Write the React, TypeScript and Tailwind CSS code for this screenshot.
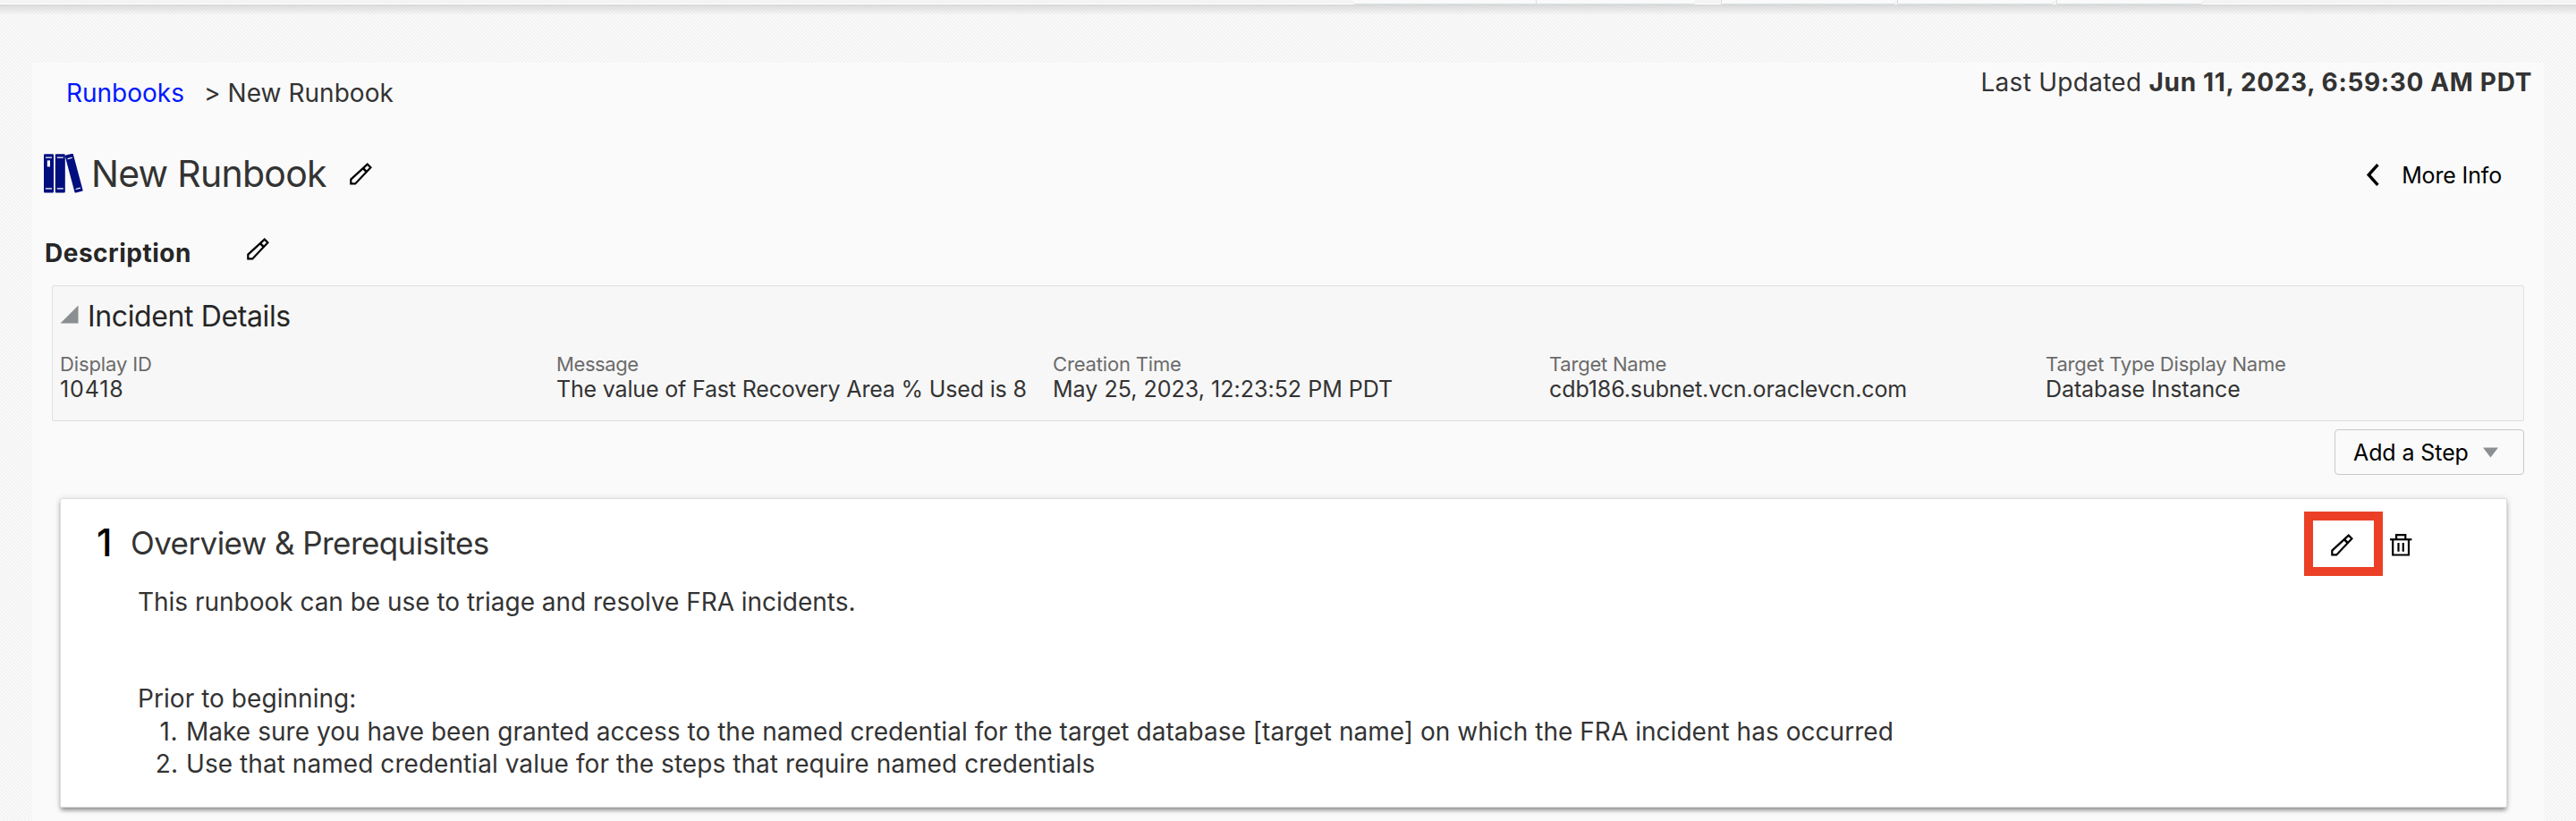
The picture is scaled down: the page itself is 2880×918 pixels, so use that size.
import React from "react";

function Pencil({ className }: { className: string }) {
  return (
    <svg className={className} width="25" height="25" viewBox="0 0 25 25" fill="none" stroke="#000" strokeWidth="2.2">
      <path d="M1.3 23.4V18.6L19.8 1.6L23.4 5.2L6.2 23.4Z" />
      <path d="M14.8 6L18.9 10.1" strokeWidth="2.6" />
    </svg>
  );
}

function Trash({ className }: { className: string }) {
  return (
    <svg className={className} width="25" height="25" viewBox="0 0 25 25" fill="none" stroke="#000" strokeWidth="2.2">
      <path d="M7.1 6V1.2H17.3V6" />
      <path d="M0 6.2H24.4" />
      <path d="M3.2 6.2V23.5H21V6.2" />
      <path d="M9.5 10V19.8M14.8 10V19.8" />
    </svg>
  );
}

function Books() {
  return (
    <svg className="mt-0.5 shrink-0" width="44" height="44" viewBox="0 0 44 44" fill="#000f7e">
      <rect x="0" y="0.2" width="11" height="43.2" rx="1.2" />
      <rect x="12.8" y="0.2" width="11" height="43.2" rx="1.2" />
      <g transform="rotate(-15 33.6 21.8)">
        <rect x="29" y="0" width="9.4" height="43.4" rx="1.2" />
        <path d="M31 4.4H36.4M31 39.4H36.4" stroke="#fff" strokeWidth="1.2" />
      </g>
      <path d="M2 4.2H9M14.8 4.2H21.8M2 38.9H9M14.8 38.9H21.8" stroke="#fff" strokeWidth="1.2" />
      <rect x="3.8" y="7.4" width="3.2" height="7" fill="#fff" />
    </svg>
  );
}

const details = [
  { label: "Display ID", value: "10418", l: "tracking-[-0.12px]", v: "tracking-[0.9px]" },
  { label: "Message", value: "The value of Fast Recovery Area % Used is 8", l: "tracking-[-0.4px]", v: "tracking-[-0.17px]" },
  { label: "Creation Time", value: "May 25, 2023, 12:23:52 PM PDT", l: "tracking-[-0.17px]", v: "tracking-[0.02px]" },
  { label: "Target Name", value: "cdb186.subnet.vcn.oraclevcn.com", l: "tracking-[-0.23px]", v: "tracking-[-0.1px]" },
  { label: "Target Type Display Name", value: "Database Instance", l: "tracking-[-0.2px]", v: "tracking-[-0.1px]" },
];

const tab = "h-[5px] border-b border-[#d8dfe3] bg-[#fafafa]";

export default function App() {
  return (
    <div className="flex h-[918px] w-[2880px] flex-col overflow-hidden bg-[repeating-linear-gradient(45deg,#f2f2f2_0px,#f2f2f2_1.414px,#fafafa_1.414px,#fafafa_2.828px)] font-['Inter',sans-serif] text-[#333333]">
      <header className="h-[5px] shrink-0 border-b border-white bg-[#f4f4f4]">
        <div className="flex pl-[1512px]">
          <div className={`${tab} w-[205px] rounded-bl`} />
          <div className={`${tab} mr-7 w-[179px] rounded-br border-l`} />
          <div className={`${tab} mr-px w-[196px] rounded-br border-l`} />
          <div className={`${tab} mr-0.5 w-[176px] rounded-br border-l`} />
          <div className={`${tab} w-[164px] rounded-br border-l`} />
        </div>
      </header>
      <div className="h-3 shrink-0 bg-linear-to-b from-black/12 to-transparent" />

      <main className="mx-9 mt-[53px] flex grow flex-col bg-[#fafafa]">
        <div className="flex h-[100px] shrink-0 items-start justify-between pr-[13px] pl-[38px] text-[28px] leading-10">
          <nav className="mt-3.5 flex">
            <a className="w-[154px] text-[#0018ff]">Runbooks</a>
            <span className="tracking-[0.05px]">&gt; New Runbook</span>
          </nav>
          <p className="mt-0.5 tracking-[0.28px]">
            Last Updated <b className="font-bold tracking-[0.65px]">Jun 11, 2023, 6:59:30 AM PDT</b>
          </p>
        </div>

        <div className="flex h-[93px] shrink-0 items-start pr-[47px] pl-[13px]">
          <Books />
          <h1 className="ml-[9px] w-[289px] text-[41px] leading-[48px] tracking-[-0.72px] whitespace-nowrap">New Runbook</h1>
          <Pencil className="mt-3" />
          <div className="ml-auto flex items-start text-black">
            <svg className="mt-[13px] mr-6" width="16" height="25" viewBox="0 0 16 25" fill="none" stroke="#000" strokeWidth="3.4">
              <path d="M13.4 1.2L3.2 12.5L13.4 23.8" />
            </svg>
            <span className="mt-[11px] text-[25px] leading-[30px] tracking-[-0.15px]">More Info</span>
          </div>
        </div>

        <div className="flex h-14 shrink-0 items-start pl-3.5">
          <h2 className="w-[226px] text-[28px] leading-10 font-bold tracking-[0.5px] text-[#262626]">Description</h2>
          <Pencil className="mt-[3px]" />
        </div>

        <section className="mr-[22px] ml-[22px] h-[152px] shrink-0 rounded-xs border border-[#dfdfdf] bg-[#f7f7f7] pl-2">
          <div className="flex h-[75px] items-start pt-3.5">
            <svg className="mt-[7px] mr-2.5" width="21" height="21" viewBox="0 0 21 21" fill="#8b8f92">
              <path d="M0.5 20.5H20.5V0.5Z" />
            </svg>
            <h3 className="text-[32px] leading-10 tracking-[-0.38px] text-[#262626]">Incident Details</h3>
          </div>
          <dl className="flex">
            {details.map((d) => (
              <div key={d.label} className="w-[555px] shrink-0 whitespace-nowrap last:w-[500px]">
                <dt className={`text-[22px] leading-6 text-[#6b6b6b] ${d.l}`}>{d.label}</dt>
                <dd className={`mt-px text-[25px] leading-[30px] ${d.v}`}>{d.value}</dd>
              </div>
            ))}
          </dl>
        </section>

        <button className="mt-[9px] mr-[22px] flex h-[51px] w-[212px] shrink-0 items-center self-end rounded-sm border border-[#c8c8c8] pl-5 text-[25px] leading-[30px] tracking-[-0.1px] text-black">
          Add a Step
          <svg className="ml-4" width="17" height="12" viewBox="0 0 17 12" fill="#8b8f92">
            <path d="M0 0.5H17L8.5 11.5Z" />
          </svg>
        </button>

        <section className="mt-[26px] mr-[41px] ml-[31px] h-[346px] shrink-0 rounded-xs border border-[#dedede] bg-white shadow-[0_4px_5px_-1px_rgba(0,0,0,0.4),0_0_7px_rgba(0,0,0,0.12)]">
          <div className="flex h-[97px] items-start pr-[105px] pl-10">
            <span className="mt-[25px] w-[38px] text-[42px] leading-[48px] font-medium text-black">1</span>
            <h3 className="mt-[27px] text-[35px] leading-[44px] tracking-[-0.58px]">Overview &amp; Prerequisites</h3>
            <div className="ml-auto flex">
              <div className="mt-3.5 mr-2 h-[72px] w-[88px] border-[10px] border-[#eb4026] pt-[15px] pl-5">
                <Pencil className="" />
              </div>
              <Trash className="mt-[39px]" />
            </div>
          </div>
          <div className="pl-[86px] text-[28px] leading-[36.5px]">
            <p className="tracking-[-0.02px]">This runbook can be use to triage and resolve FRA incidents.</p>
            <p className="mt-[71px] tracking-[0.05px]">Prior to beginning:</p>
            <ol className="mt-[0.5px]">
              <li className="flex">
                <span className="mr-[9px] w-[45px] text-right tracking-[0.5px]">1.</span>
                <span className="tracking-[0.035px]">
                  Make sure you have been granted access to the named credential for the target database [target name] on which the FRA incident has occurred
                </span>
              </li>
              <li className="flex">
                <span className="mr-[9px] w-[45px] text-right">2.</span>
                <span className="tracking-[0.06px]">Use that named credential value for the steps that require named credentials</span>
              </li>
            </ol>
          </div>
        </section>
      </main>
    </div>
  );
}
